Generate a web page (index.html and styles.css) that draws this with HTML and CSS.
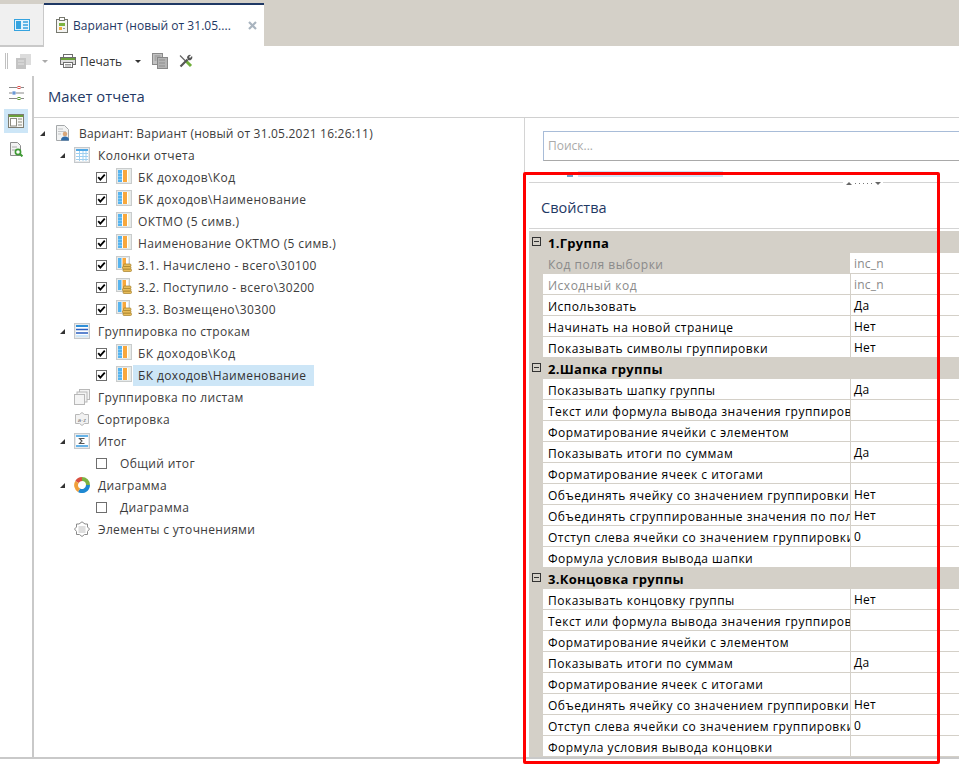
FILE: index.html
```html
<!DOCTYPE html>
<html lang="ru">
<head>
<meta charset="utf-8">
<title>Вариант</title>
<link rel="stylesheet" href="styles.css">
</head>
<body>
<svg class="sprites" width="0" height="0">
  <symbol id="col" viewBox="0 0 16 16"><rect x=".5" y=".5" width="15" height="15" fill="#e6eaea" stroke="#c9cccc"/><rect x="2" y="2" width="12" height="12" fill="#fff"/><rect x="2" y="2" width="4" height="12" fill="#58b4ee"/><rect x="7" y="2" width="4" height="12" fill="#f8a83c"/><rect x="12" y="2" width="2" height="12" fill="#f3f0d8"/><path d="M2 5.500h4M2 8.500h4M2 11.500h4" stroke="#a6d8f6" stroke-opacity=".6"/></symbol>
  <symbol id="sum" viewBox="0 0 16 16"><rect x=".5" y=".5" width="13" height="13" fill="#e6eaea" stroke="#c9cccc"/><rect x="2" y="2" width="10" height="10" fill="#fff"/><rect x="2" y="2" width="3.500" height="10" fill="#58b4ee"/><rect x="6.500" y="2" width="3.500" height="10" fill="#f8a83c"/><g fill="#e8bc5a" stroke="#a57f28" stroke-width=".7"><rect x="7" y="13" width="8.500" height="2.500" rx="1"/><rect x="6.500" y="10.500" width="8.500" height="2.500" rx="1"/><rect x="7.500" y="8" width="7.500" height="2.500" rx="1"/></g></symbol>
  <symbol id="tbl" viewBox="0 0 16 16"><rect x=".5" y=".5" width="15" height="15" fill="#e8eaec" stroke="#c5c9cc"/><rect x="2" y="2" width="12" height="12" fill="#fff"/><path d="M2 3h12" stroke="#52a9e6" stroke-width="2"/><path d="M2 6.500h12M2 9.500h12M2 12.500h12M5.500 4v10M9 4v10M12 4v10" stroke="#9fd0f0"/></symbol>
  <symbol id="grp" viewBox="0 0 16 16"><rect x=".5" y=".5" width="15" height="15" fill="#e8eaec" stroke="#c5c9cc"/><rect x="2" y="2" width="12" height="12" fill="#fff"/><path d="M2 3h12" stroke="#2f8fd8" stroke-width="2"/><path d="M2 6.500h12M2 10h12" stroke="#2b5fc0" stroke-width="1.600"/><path d="M2 13h12" stroke="#9fd0f0"/></symbol>
  <symbol id="check" viewBox="0 0 11 11"><path d="M1.500 5l2.600 3L9.500 2" fill="none" stroke="#000" stroke-width="2.200"/></symbol>
</svg>

<div class="app">
  <div class="tabbar">
    <div class="tab-home">
      <svg class="ico15" viewBox="0 0 16 12"><rect x=".5" y=".5" width="15" height="11" fill="#e4f3fc" stroke="#35a3df"/><rect x="2" y="2" width="5" height="8" fill="#35a3df"/><path d="M9 3h5M9 6h5M9 9h5" stroke="#35a3df" stroke-width="1.600"/></svg>
    </div>
    <div class="tab-active">
      <svg class="ico-clip" viewBox="0 0 12 16"><rect x=".5" y="2.500" width="11" height="13" fill="#f4f4f2" stroke="#77796f"/><rect x="3.500" y=".5" width="5" height="3" fill="#fff" stroke="#77796f"/><rect x="3" y="6" width="6" height="3" fill="#7cb342"/><rect x="3" y="10" width="3" height="3" fill="#f2a93b"/><path d="M7 11.500h2" stroke="#999"/></svg>
      <span class="tab-text">Вариант (новый от 31.05....</span>
      <svg class="tab-x" viewBox="0 0 9 9"><path d="M1 1l7 7M8 1l-7 7" stroke="#a9b4bf" stroke-width="2.200"/></svg>
    </div>
  </div>

  <div class="toolbar">
    <span class="grip"></span>
    <svg class="tool-copy" viewBox="0 0 17 16"><rect x="5" y="1" width="11" height="11" fill="#dcdcdc"/><rect x="1" y="5" width="10" height="11" fill="#c4c4c4"/><path d="M3 8h6M3 11h6" stroke="#e4e4e4"/></svg>
    <span class="caret caret-off"></span>
    <svg class="tool-print" viewBox="0 0 16 14"><rect x="3.500" y=".5" width="9" height="3" fill="#fff" stroke="#6d6d6d"/><rect x=".5" y="3.500" width="15" height="7" fill="#dedede" stroke="#6d6d6d"/><rect x="1" y="4" width="14" height="2" fill="#6aa03a"/><rect x="3.500" y="8.500" width="9" height="5" fill="#fff" stroke="#6d6d6d"/><path d="M5 10.500h6M5 12h6" stroke="#999"/></svg>
    <span class="tool-label">Печать</span>
    <span class="caret"></span>
    <svg class="tool-pages" viewBox="0 0 16 16"><rect x=".5" y=".5" width="10" height="11" fill="#c2c2c2" stroke="#8a8a8a"/><rect x="5.500" y="4.500" width="10" height="11" fill="#b4b4b4" stroke="#888"/><path d="M2.500 3h6M2.500 5h2M2.500 7h2M7 7h6M7 10h6M7 13h6" stroke="#8e8e8e"/></svg>
    <svg class="tool-wrench" viewBox="0 0 14 14"><path d="M1 1.500l6 6" stroke="#666" stroke-width="1.300"/><path d="M7 7l5 5" stroke="#6fae3a" stroke-width="3"/><path d="M1.500 12.500l7-7" stroke="#555" stroke-width="2.200"/><path d="M8 3.500A3 3 0 0 1 12 1L10 3l1 1 2-2a3 3 0 0 1-4 4z" fill="#555"/></svg>
  </div>

  <div class="main">
    <aside class="rail">
      <span class="rail-btn">
        <svg class="rail-ico" viewBox="0 0 15 14"><path d="M0 1.500h8M12 1.500h3M0 7h3M7 7h8M0 12.500h8M12 12.500h3" stroke="#888"/><rect x="9" y=".5" width="2" height="2" fill="none" stroke="#d9534f"/><rect x="4" y="6" width="2" height="2" fill="none" stroke="#3c78c8"/><rect x="9" y="11.500" width="2" height="2" fill="none" stroke="#5d9a35"/></svg>
      </span>
      <span class="rail-btn rail-on">
        <svg class="rail-ico2" viewBox="0 0 16 14"><rect x=".5" y=".5" width="15" height="13" fill="#f7f7f4" stroke="#7d7d72"/><path d="M1 2h14" stroke="#6aa03a" stroke-width="2"/><rect x="2.500" y="4.500" width="6" height="7.500" fill="#fff" stroke="#8b8b80"/><path d="M10 5h4M10 8h4M10 11h4" stroke="#8b8b80"/></svg>
      </span>
      <span class="rail-btn">
        <svg class="rail-ico3" viewBox="0 0 14 15"><path d="M1.500.5h7l3 3v10h-10z" fill="#f2f2f2" stroke="#8c8c8c"/><path d="M3 5h5M3 8h3" stroke="#aaa"/><circle cx="9" cy="10" r="2.600" fill="#fff" stroke="#3f9a35" stroke-width="1.600"/><path d="M11 12l2.400 2.400" stroke="#3f9a35" stroke-width="2"/></svg>
      </span>
    </aside>

    <div class="content">
      <h1 class="page-title">Макет отчета</h1>
      <div class="panes">
        <div class="tree">
          <div class="row lvl0">
            <span class="arrow"></span>
            <svg class="ico root-ico" viewBox="0 0 16 16"><path d="M1.500.5h8l4 4v11h-12z" fill="#f2f3f3" stroke="#a5a8aa"/><path d="M3 4h5M3 6.500h8M3 9h3" stroke="#c3c5c7"/><circle cx="10" cy="9" r="2.300" fill="#d9a679"/><path d="M6 15.500c0-3 1.500-4 4-4s4 1 4 4z" fill="#2f6ba8"/></svg>
            <span class="label">Вариант: Вариант (новый от 31.05.2021 16:26:11)</span>
          </div>
          <div class="row lvl1">
            <span class="arrow"></span>
            <svg class="ico"><use href="#tbl"/></svg>
            <span class="label">Колонки отчета</span>
          </div>
          <div class="row lvl2"><span class="cb"><svg class="tick"><use href="#check"/></svg></span><svg class="ico2"><use href="#col"/></svg><span class="label">БК доходов\Код</span></div>
          <div class="row lvl2"><span class="cb"><svg class="tick"><use href="#check"/></svg></span><svg class="ico2"><use href="#col"/></svg><span class="label">БК доходов\Наименование</span></div>
          <div class="row lvl2"><span class="cb"><svg class="tick"><use href="#check"/></svg></span><svg class="ico2"><use href="#col"/></svg><span class="label">ОКТМО (5 симв.)</span></div>
          <div class="row lvl2"><span class="cb"><svg class="tick"><use href="#check"/></svg></span><svg class="ico2"><use href="#col"/></svg><span class="label">Наименование ОКТМО (5 симв.)</span></div>
          <div class="row lvl2"><span class="cb"><svg class="tick"><use href="#check"/></svg></span><svg class="ico2"><use href="#sum"/></svg><span class="label">3.1. Начислено - всего\30100</span></div>
          <div class="row lvl2"><span class="cb"><svg class="tick"><use href="#check"/></svg></span><svg class="ico2"><use href="#sum"/></svg><span class="label">3.2. Поступило - всего\30200</span></div>
          <div class="row lvl2"><span class="cb"><svg class="tick"><use href="#check"/></svg></span><svg class="ico2"><use href="#sum"/></svg><span class="label">3.3. Возмещено\30300</span></div>
          <div class="row lvl1">
            <span class="arrow"></span>
            <svg class="ico"><use href="#grp"/></svg>
            <span class="label">Группировка по строкам</span>
          </div>
          <div class="row lvl2"><span class="cb"><svg class="tick"><use href="#check"/></svg></span><svg class="ico2"><use href="#col"/></svg><span class="label">БК доходов\Код</span></div>
          <div class="row lvl2"><span class="cb"><svg class="tick"><use href="#check"/></svg></span><svg class="ico2"><use href="#col"/></svg><span class="label selected">БК доходов\Наименование</span></div>
          <div class="row lvl1">
            <span class="arrow blank"></span>
            <svg class="ico" viewBox="0 0 16 16"><rect x="5.500" y=".5" width="10" height="10" fill="#f4f4f4" stroke="#b8b8b8"/><rect x="3" y="3" width="10" height="10" fill="#f4f4f4" stroke="#b8b8b8"/><rect x=".5" y="5.500" width="10" height="10" fill="#f4f4f4" stroke="#b8b8b8"/></svg>
            <span class="label">Группировка по листам</span>
          </div>
          <div class="row lvl1">
            <span class="arrow blank"></span>
            <svg class="ico" viewBox="0 0 16 16"><path d="M1.500 3.500h4l2.500-2 2.500 2h4v9h-4l-2.500 2-2.500-2h-4z" fill="#f2f2f2" stroke="#b8b8b8"/><text class="sort-txt" x="8" y="10.500" text-anchor="middle">a·z</text></svg>
            <span class="label tight">Сортировка</span>
          </div>
          <div class="row lvl1">
            <span class="arrow"></span>
            <svg class="ico" viewBox="0 0 16 16"><rect x=".5" y=".5" width="15" height="15" fill="#e8eaec" stroke="#c5c9cc"/><rect x="2" y="2" width="12" height="12" fill="#fff"/><path d="M2 3h12M2 13h12" stroke="#67b3e8" stroke-width="2"/><path d="M10.500 5.500H5.500L8 8l-2.500 2.500h5" fill="none" stroke="#555" stroke-width="1.100"/></svg>
            <span class="label">Итог</span>
          </div>
          <div class="row lvl2"><span class="cb"></span><span class="label nested">Общий итог</span></div>
          <div class="row lvl1">
            <span class="arrow"></span>
            <svg class="ico" viewBox="0 0 16 16"><g fill="none" stroke-width="4"><path d="M3 5A6 6 0 0 1 8 2" stroke="#d9503f"/><path d="M8 2a6 6 0 0 1 6 6" stroke="#7cb342"/><path d="M14 8a6 6 0 0 1-9 5.200" stroke="#1e88d2"/><path d="M5 13.200A6 6 0 0 1 3 5" stroke="#f0a03a"/></g></svg>
            <span class="label">Диаграмма</span>
          </div>
          <div class="row lvl2"><span class="cb"></span><span class="label nested">Диаграмма</span></div>
          <div class="row lvl1">
            <span class="arrow blank"></span>
            <svg class="ico" viewBox="0 0 16 16"><path d="M8 .8l3 2.200h2.500v3l2 2-2 2.500v3h-3L8 15.500 5.500 13.500h-3v-3l-2-2.500 2-2v-3H5z" fill="#fff" stroke="#8a8a8a"/><rect x="4.500" y="5" width="7" height="7" fill="#dedede"/></svg>
            <span class="label">Элементы с уточнениями</span>
          </div>
        </div>

        <div class="side">
          <div class="search">Поиск...</div>
          <div class="peek"><span class="peek-ico"></span><span class="peek-sel"></span></div>
          <div class="splitter">
            <span class="handle"><span class="tri-up"></span><span class="dot"></span><span class="dot"></span><span class="dot"></span><span class="dot"></span><span class="dot"></span><span class="tri-down"></span></span>
          </div>
          <h2 class="side-title">Свойства</h2>
          <div class="grid">
            <div class="g-head g-head-first"><span class="minus"></span>1.Группа</div>
            <div class="g-row first off"><span class="n">Код поля выборки</span><span class="v">inc_n</span></div>
            <div class="g-row off"><span class="n">Исходный код</span><span class="v">inc_n</span></div>
            <div class="g-row"><span class="n">Использовать</span><span class="v">Да</span></div>
            <div class="g-row"><span class="n">Начинать на новой странице</span><span class="v">Нет</span></div>
            <div class="g-row"><span class="n">Показывать символы группировки</span><span class="v">Нет</span></div>
            <div class="g-head"><span class="minus"></span>2.Шапка группы</div>
            <div class="g-row"><span class="n">Показывать шапку группы</span><span class="v">Да</span></div>
            <div class="g-row"><span class="n">Текст или формула вывода значения группировки</span><span class="v"></span></div>
            <div class="g-row"><span class="n">Форматирование ячейки с элементом</span><span class="v"></span></div>
            <div class="g-row"><span class="n">Показывать итоги по суммам</span><span class="v">Да</span></div>
            <div class="g-row"><span class="n">Форматирование ячеек с итогами</span><span class="v"></span></div>
            <div class="g-row"><span class="n">Объединять ячейку со значением группировки</span><span class="v">Нет</span></div>
            <div class="g-row"><span class="n">Объединять сгруппированные значения по полю</span><span class="v">Нет</span></div>
            <div class="g-row"><span class="n">Отступ слева ячейки со значением группировки</span><span class="v">0</span></div>
            <div class="g-row"><span class="n">Формула условия вывода шапки</span><span class="v"></span></div>
            <div class="g-head"><span class="minus"></span>3.Концовка группы</div>
            <div class="g-row"><span class="n">Показывать концовку группы</span><span class="v">Нет</span></div>
            <div class="g-row"><span class="n">Текст или формула вывода значения группировки</span><span class="v"></span></div>
            <div class="g-row"><span class="n">Форматирование ячейки с элементом</span><span class="v"></span></div>
            <div class="g-row"><span class="n">Показывать итоги по суммам</span><span class="v">Да</span></div>
            <div class="g-row"><span class="n">Форматирование ячеек с итогами</span><span class="v"></span></div>
            <div class="g-row"><span class="n">Объединять ячейку со значением группировки</span><span class="v">Нет</span></div>
            <div class="g-row"><span class="n">Отступ слева ячейки со значением группировки</span><span class="v">0</span></div>
            <div class="g-row"><span class="n">Формула условия вывода концовки</span><span class="v"></span></div>
          </div>
        </div>
      </div>
    </div>
  </div>
  <div class="red-frame"></div>
</div>
</body>
</html>
```

FILE: styles.css
```css
* { box-sizing: border-box; }
html, body { margin: 0; padding: 0; background: #fff; }
body { font-family: "Open Sans", "Noto Sans", sans-serif; font-size: 12px; color: #3c3c3c; }
.sprites { position: absolute; }
.app { position: relative; width: 959px; height: 768px; overflow: hidden; background: #fff; }

.tabbar { display: flex; height: 46px; padding-top: 3px; background: #d4d0c8; }
.tab-home { width: 44px; height: 43px; margin-top: 1px; background: #f0f0f0; border-bottom: 2px solid #c9c9c9; border-right: 1px solid #c9c9c9; display: flex; align-items: center; justify-content: center; }
.ico15 { width: 16px; height: 12px; }
.tab-active { width: 220px; height: 43px; background: #fff; border-top: 2px solid #1f3864; display: flex; align-items: center; padding-left: 12px; }
.ico-clip { width: 12px; height: 16px; flex: none; margin-top: -2px; }
.tab-text { margin-left: 5px; color: #1f3864; font-size: 12px; letter-spacing: .04px; white-space: nowrap; }
.tab-x { width: 9px; height: 9px; margin-left: 17px; }

.toolbar { height: 30px; display: flex; align-items: center; padding-left: 5px; }
.grip { width: 3px; height: 16px; border-left: 1px solid #c0c0c0; border-right: 1px solid #c0c0c0; }
.tool-copy { width: 17px; height: 16px; margin-left: 7px; }
.caret { width: 0; height: 0; border-left: 3px solid transparent; border-right: 3px solid transparent; border-top: 3px solid #333; margin-left: 13px; }
.caret-off { border-top-color: #aaa; margin-left: 10px; }
.tool-print { width: 16px; height: 14px; margin-left: 12px; }
.tool-label { margin-left: 4px; color: #333; }
.tool-pages { width: 16px; height: 16px; margin-left: 11px; }
.tool-wrench { width: 14px; height: 14px; margin-left: 11px; }

.main { display: flex; height: 683px; border-bottom: 2px solid #c9c9c9; }
.rail { width: 34px; border-right: 2px solid #c9c9c9; display: flex; flex-direction: column; align-items: flex-start; padding: 5px 0 0 4px; }
.rail-btn { width: 24px; height: 24px; display: flex; align-items: center; justify-content: center; margin-bottom: 4px; }
.rail-on { background: #cde6f7; }
.rail-ico { width: 15px; height: 14px; }
.rail-ico2 { width: 16px; height: 14px; }
.rail-ico3 { width: 14px; height: 15px; }

.content { flex: 1; min-width: 0; display: flex; flex-direction: column; }
.page-title { height: 42px; margin: 0; padding: 11px 0 0 14px; border-bottom: 1px solid #d0d0d0; font-size: 14.8px; line-height: 19px; font-weight: 400; color: #1f3864; }
.panes { flex: 1; display: flex; min-height: 0; }

.tree { width: 491px; border-right: 1px solid #d4d4d4; padding-top: 4px; }
.row { height: 22px; display: flex; align-items: center; white-space: nowrap; letter-spacing: .37px; }
.lvl0 { padding-left: 6px; letter-spacing: .2px; }
.lvl1 { padding-left: 26px; letter-spacing: .33px; }
.lvl2 { padding-left: 62px; }
.arrow { width: 0; height: 0; border-style: solid; border-width: 0 0 5px 5px; border-color: transparent transparent #333 transparent; margin-right: 9px; flex: none; }
.arrow.blank { border-color: transparent; }
.ico { width: 16px; height: 16px; flex: none; }
.root-ico { margin-left: 1px; }
.lvl1 .label { margin-left: 8px; }
.lvl1 .label.tight { margin-left: 7px; }
.lvl0 .label { margin-left: 8px; }
.ico2 { width: 16px; height: 16px; flex: none; margin-left: 9px; margin-top: -2px; }
.lvl2 .label { margin-left: 1px; padding: 0 5px; line-height: 21px; }
.lvl2 .label.nested { margin-left: 8px; padding: 0 5px; }
.label.selected { background: #cde6f7; width: 181px; color: #333; }
.cb { width: 11px; height: 11px; border: 1px solid #6e6e6e; background: #fff; flex: none; display: flex; }
.tick { width: 9px; height: 9px; }
.sort-txt { font-size: 6px; fill: #666; font-family: "Open Sans", sans-serif; }

.side { flex: 1; min-width: 0; padding-top: 13px; }
.search { height: 30px; margin-left: 18px; border: 1px solid #a9a9a9; border-top-color: #a8bcd8; border-left-color: #a8bcd8; border-right: 0; color: #aaa; padding-left: 4px; line-height: 27px; }
.peek { height: 6px; margin-top: 10px; margin-left: 42px; display: flex; align-items: flex-end; }
.peek-ico { width: 6px; height: 4px; background: #6f9fc9; margin-right: 5px; }
.peek-sel { width: 145px; height: 6px; background: #cde6f7; }
.splitter { height: 1px; margin: 5px 0 0 4px; background: #d4d4d4; position: relative; }
.handle { position: absolute; left: 314px; top: -3px; width: 40px; height: 8px; background: #fff; display: flex; align-items: center; justify-content: center; gap: 3px; }
.tri-up { width: 0; height: 0; border-left: 3px solid transparent; border-right: 3px solid transparent; border-bottom: 3px solid #666; }
.tri-down { width: 0; height: 0; border-left: 3px solid transparent; border-right: 3px solid transparent; border-top: 3px solid #666; }
.dot { width: 1px; height: 1px; background: #777; }
.side-title { height: 46px; margin: 0 0 0 4px; padding: 15px 0 0 12px; border-bottom: 1px solid #d4d4d4; font-size: 14.5px; line-height: 20px; font-weight: 400; color: #1f3864; }

.grid { margin: 2px 0 0 4px; background: #d4d0c8; color: #000; }
.g-head { height: 21px; padding-left: 19px; font-weight: 700; font-size: 13px; letter-spacing: .3px; line-height: 22px; position: relative; background: #d4d0c8; color: #000; }
.g-head-first { height: 22px; line-height: 24px; }
.minus { position: absolute; left: 3px; top: 5px; width: 9px; height: 9px; border: 1px solid #333; background: #d4d0c8; }
.g-head-first .minus { top: 6px; }
.minus::after { content: ""; position: absolute; left: 1px; right: 1px; top: 3px; height: 1px; background: #333; }
.g-row { height: 21px; margin-left: 14px; display: flex; background: #fff; border-bottom: 1px solid #d4d0c8; line-height: 24px; }
.n { width: 307px; padding-left: 5px; overflow: hidden; white-space: nowrap; flex: none; letter-spacing: .5px; }
.v { flex: 1; border-left: 1px solid #d4d0c8; padding-left: 3px; line-height: 22px; letter-spacing: .2px; }
.off { color: #8a8a8a; }
.first .n { background: #d4d0c8; }
.first .v { border-left-color: #fff; }

.red-frame { position: absolute; left: 523px; top: 172px; width: 417px; height: 592px; border: 3px solid #f00; border-radius: 2px; }
```
